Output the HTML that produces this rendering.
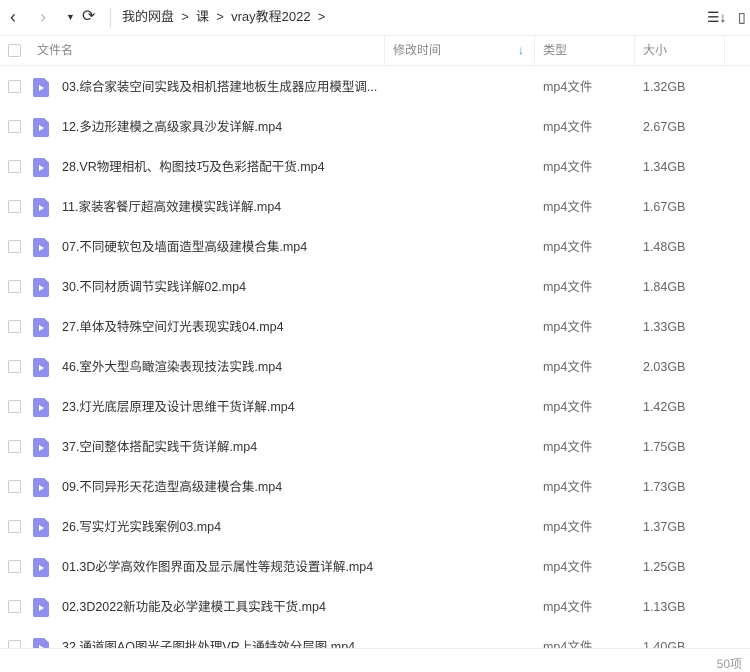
<!DOCTYPE html>
<html><head><meta charset="utf-8"><style>
*{margin:0;padding:0;box-sizing:border-box}
body{width:750px;height:672px;overflow:hidden;background:#fff;font-family:"Liberation Sans","Noto Sans CJK SC",sans-serif;color:#333;position:relative}
.top{position:absolute;top:0;left:0;width:750px;height:35px;font-size:13px}
.top span{position:absolute;top:0;line-height:34px}
.hdr{position:absolute;top:35px;left:0;width:750px;height:31px;border-top:1px solid #eee;border-bottom:1px solid #eee;font-size:12px;color:#888}
.hdr span{position:absolute;top:0;line-height:29px}
.sep{position:absolute;top:0;width:1px;height:30px;background:#eee}
.cb{position:absolute;left:8px;width:13px;height:13px;border:1px solid #ccc;border-radius:2px}
.row{position:absolute;left:0;width:750px;height:40px;font-size:12.5px}
.row span{position:absolute;top:0;line-height:40px}
.row .cb{top:13px}
.ic{position:absolute;left:33px;top:11px;width:16px;height:19px;background:#8f8ff0;border-radius:2px;clip-path:polygon(0 0,70% 0,100% 25%,100% 100%,0 100%)}
.ic:after{content:"";position:absolute;left:6px;top:7px;border-left:5px solid #fff;border-top:3px solid transparent;border-bottom:3px solid transparent}
.nm{left:62px}
.ty{left:543px;color:#666}
.sz{left:643px;color:#666}
.foot{position:absolute;top:648px;left:0;width:750px;height:24px;background:#fff;border-top:1px solid #eee;font-size:12px;color:#999}
</style></head><body>
<div class="top">
<span style="left:10px;font-size:18px;color:#333">&#8249;</span>
<span style="left:40px;font-size:18px;color:#bbb">&#8250;</span>
<span style="left:66px;font-size:9px">&#9660;</span>
<span style="left:82px;font-size:16px">&#10227;</span>
<div style="position:absolute;left:110px;top:8px;width:1px;height:20px;background:#ddd"></div>
<span style="left:122px">我的网盘 &nbsp;&gt;&nbsp; 课 &nbsp;&gt;&nbsp; vray教程2022 &nbsp;&gt;</span>
<span style="left:707px;font-size:14px">☰↓</span>
<span style="left:738px;font-size:14px">▯</span>
</div>
<div class="hdr">
<div class="cb" style="top:8px"></div>
<span style="left:37px">文件名</span>
<div class="sep" style="left:384px"></div>
<span style="left:393px">修改时间</span>
<span style="left:518px;color:#2a9be0;font-weight:bold">↓</span>
<div class="sep" style="left:534px"></div>
<span style="left:543px">类型</span>
<div class="sep" style="left:634px"></div>
<span style="left:643px">大小</span>
<div class="sep" style="left:724px"></div>
</div>
<div class="row" style="top:67px"><div class="cb"></div><div class="ic"></div><span class="nm">03.综合家装空间实践及相机搭建地板生成器应用模型调...</span><span class="ty">mp4文件</span><span class="sz">1.32GB</span></div>
<div class="row" style="top:107px"><div class="cb"></div><div class="ic"></div><span class="nm">12.多边形建模之高级家具沙发详解.mp4</span><span class="ty">mp4文件</span><span class="sz">2.67GB</span></div>
<div class="row" style="top:147px"><div class="cb"></div><div class="ic"></div><span class="nm">28.VR物理相机、构图技巧及色彩搭配干货.mp4</span><span class="ty">mp4文件</span><span class="sz">1.34GB</span></div>
<div class="row" style="top:187px"><div class="cb"></div><div class="ic"></div><span class="nm">11.家装客餐厅超高效建模实践详解.mp4</span><span class="ty">mp4文件</span><span class="sz">1.67GB</span></div>
<div class="row" style="top:227px"><div class="cb"></div><div class="ic"></div><span class="nm">07.不同硬软包及墙面造型高级建模合集.mp4</span><span class="ty">mp4文件</span><span class="sz">1.48GB</span></div>
<div class="row" style="top:267px"><div class="cb"></div><div class="ic"></div><span class="nm">30.不同材质调节实践详解02.mp4</span><span class="ty">mp4文件</span><span class="sz">1.84GB</span></div>
<div class="row" style="top:307px"><div class="cb"></div><div class="ic"></div><span class="nm">27.单体及特殊空间灯光表现实践04.mp4</span><span class="ty">mp4文件</span><span class="sz">1.33GB</span></div>
<div class="row" style="top:347px"><div class="cb"></div><div class="ic"></div><span class="nm">46.室外大型鸟瞰渲染表现技法实践.mp4</span><span class="ty">mp4文件</span><span class="sz">2.03GB</span></div>
<div class="row" style="top:387px"><div class="cb"></div><div class="ic"></div><span class="nm">23.灯光底层原理及设计思维干货详解.mp4</span><span class="ty">mp4文件</span><span class="sz">1.42GB</span></div>
<div class="row" style="top:427px"><div class="cb"></div><div class="ic"></div><span class="nm">37.空间整体搭配实践干货详解.mp4</span><span class="ty">mp4文件</span><span class="sz">1.75GB</span></div>
<div class="row" style="top:467px"><div class="cb"></div><div class="ic"></div><span class="nm">09.不同异形天花造型高级建模合集.mp4</span><span class="ty">mp4文件</span><span class="sz">1.73GB</span></div>
<div class="row" style="top:507px"><div class="cb"></div><div class="ic"></div><span class="nm">26.写实灯光实践案例03.mp4</span><span class="ty">mp4文件</span><span class="sz">1.37GB</span></div>
<div class="row" style="top:547px"><div class="cb"></div><div class="ic"></div><span class="nm">01.3D必学高效作图界面及显示属性等规范设置详解.mp4</span><span class="ty">mp4文件</span><span class="sz">1.25GB</span></div>
<div class="row" style="top:587px"><div class="cb"></div><div class="ic"></div><span class="nm">02.3D2022新功能及必学建模工具实践干货.mp4</span><span class="ty">mp4文件</span><span class="sz">1.13GB</span></div>
<div class="row" style="top:627px"><div class="cb"></div><div class="ic"></div><span class="nm">32.通道图AO图光子图批处理VR上通特效分层图.mp4</span><span class="ty">mp4文件</span><span class="sz">1.40GB</span></div>
<div class="foot"><span style="position:absolute;right:8px;top:6px">50项</span></div>
</body></html>
